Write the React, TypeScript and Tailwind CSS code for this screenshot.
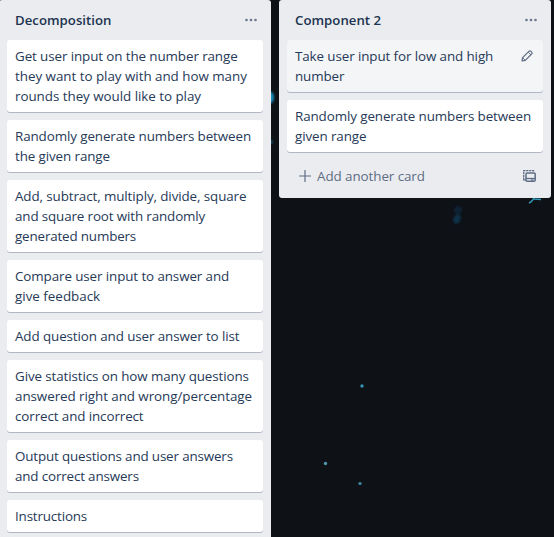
import type { ReactNode } from "react";

type Line = string | { text: string; tracking: string };
type CardData = { lines: Line[]; active?: boolean };

const decomposition: CardData[] = [
  {
    lines: [
      "Get user input on the number range",
      { text: "they want to play with and how many", tracking: "tracking-[-0.03px]" },
      { text: "rounds they would like to play", tracking: "tracking-[-0.04px]" },
    ],
  },
  { lines: ["Randomly generate numbers between", "the given range"] },
  { lines: ["Add, subtract, multiply, divide, square", { text: "and square root with randomly", tracking: "tracking-[-0.13px]" }, { text: "generated numbers", tracking: "tracking-[-0.16px]" }] },
  { lines: ["Compare user input to answer and", { text: "give feedback", tracking: "tracking-[0px]" }] },
  { lines: ["Add question and user answer to list"] },
  {
    lines: [
      "Give statistics on how many questions",
      { text: "answered right and wrong/percentage", tracking: "tracking-[-0.06px]" },
      "correct and incorrect",
    ],
  },
  { lines: [{ text: "Output questions and user answers", tracking: "tracking-[-0.15px]" }, { text: "and correct answers", tracking: "tracking-[-0.15px]" }] },
  { lines: [{ text: "Instructions", tracking: "tracking-[-0.16px]" }] },
];

const componentTwo: CardData[] = [
  { lines: ["Take user input for low and high", "number"], active: true },
  { lines: ["Randomly generate numbers between", "given range"] },
];

function Dots() {
  return (
    <svg width="14" height="4" viewBox="0 0 14 4" fill="#6b778c">
      <circle cx="2.5" cy="2" r="1.3" />
      <circle cx="7" cy="2" r="1.3" />
      <circle cx="11.500" cy="2" r="1.3" />
    </svg>
  );
}

function Pencil() {
  return (
    <svg width="12" height="12" viewBox="0 0 12 12" fill="none" stroke="#5e6c84" strokeWidth="1.2" strokeLinejoin="round">
      <path d="M1 11 L1.6 7.7 L7.9 1.4 Q9 .4 10.3 1.6 Q11.6 2.9 10.6 4 L4.3 10.3 Z" />
      <path d="M1.7 7.8 L4.2 10.2 M7.2 2.2 L9.8 4.7" strokeWidth=".9" />
    </svg>
  );
}

function TemplateIcon() {
  return (
    <svg width="13" height="12" viewBox="0 0 13 12" fill="none" stroke="#5e6c84">
      <path d="M.7 9.800V.7H10.5V2" strokeWidth="1.3" strokeDasharray="2.2 .7" />
      <path d="M.2 10H2.800" strokeWidth="1.2" />
      <rect x="3" y="2.900" width="9.200" height="8.300" rx="1.2" strokeWidth="1.500" />
      <path d="M3 8.500H12" strokeWidth="1.3" />
      <path d="M8 10H10.500" strokeWidth="1.2" />
    </svg>
  );
}

function Card({ lines, active }: CardData) {
  return (
    <div className={`flex items-start justify-between rounded-[3px] px-2 py-1.5 shadow-[0_1px_0_#b1b7c5] ${active ? "bg-[#f4f5f7]" : "bg-white"}`}>
      <div className="whitespace-nowrap text-[#263957]">
        {lines.map((line) => {
          const { text, tracking } = typeof line === "string" ? { text: line, tracking: "tracking-[-0.1px]" } : line;
          return <div key={text} className={`h-5 ${tracking}`}>{text}</div>;
        })}
      </div>
      {active && <span className="mt-1 mr-0.5 shrink-0"><Pencil /></span>}
    </div>
  );
}

function List({ title, cards, children }: { title: string; cards: CardData[]; children?: ReactNode }) {
  return (
    <section className="w-[272px] shrink-0 rounded-[3px] bg-[#ebecf0] px-2">
      <header className="flex h-10 items-center justify-between pr-[5px] pl-2">
        <h2 className="text-[13.2px] font-semibold tracking-[0.03px] text-[#20334f]">{title}</h2>
        <Dots />
      </header>
      <div className="flex flex-col gap-2">
        {cards.map((card, index) => <Card key={index} {...card} />)}
      </div>
      {children}
    </section>
  );
}

function Backdrop() {
  return (
    <svg className="absolute inset-0" width="554" height="537">
      <defs>
        <filter id="soft" x="-50%" y="-50%" width="200%" height="200%"><feGaussianBlur stdDeviation="1.3" /></filter>
        <filter id="star" x="-100%" y="-100%" width="300%" height="300%"><feGaussianBlur stdDeviation=".6" /></filter>
      </defs>
      <g filter="url(#soft)">
        <ellipse cx="270" cy="97.500" rx="4" ry="6" fill="#168bbb" />
        <ellipse cx="271" cy="142" rx="1.500" ry="2" fill="#12617f" />
        <ellipse cx="458" cy="210" rx="4" ry="4" fill="#0d2234" />
        <ellipse cx="457" cy="219" rx="3.500" ry="5" fill="#0f3149" transform="rotate(25 457 219)" />
      </g>
      <g filter="url(#star)">
        <path d="M529 203 Q533 201 535 196 M534 199L541 199.500" stroke="#3496b5" strokeWidth="1.500" fill="none" />
        <circle cx="362" cy="386" r="1.700" fill="#3794b5" />
        <circle cx="325.500" cy="463.500" r="1.700" fill="#5098ac" />
        <circle cx="360" cy="483.500" r="1.600" fill="#3e8ca4" />
      </g>
    </svg>
  );
}

export default function App() {
  return (
    <main className="relative h-[537px] w-[554px] overflow-hidden bg-[#0e1116] font-['Open_Sans','Noto_Sans',sans-serif] text-[13.4px] leading-5">
      <Backdrop />
      <div className="relative -ml-px flex h-[541px] items-start gap-2">
        <div className="flex h-full"><List title="Decomposition" cards={decomposition} /></div>
        <List title="Component 2" cards={componentTwo}>
          <footer className="flex h-[46px] items-center justify-between pt-0.5 pr-[7px] pl-3 text-[#5e6c84]">
            <div className="flex items-center gap-1.5">
              <svg width="12" height="12" viewBox="0 0 12 12" stroke="#5e6c84" strokeWidth="1.2"><path d="M6 0V12M0 6H12" /></svg>
              <span className="tracking-[-0.07px]">Add another card</span>
            </div>
            <TemplateIcon />
          </footer>
        </List>
      </div>
    </main>
  );
}
